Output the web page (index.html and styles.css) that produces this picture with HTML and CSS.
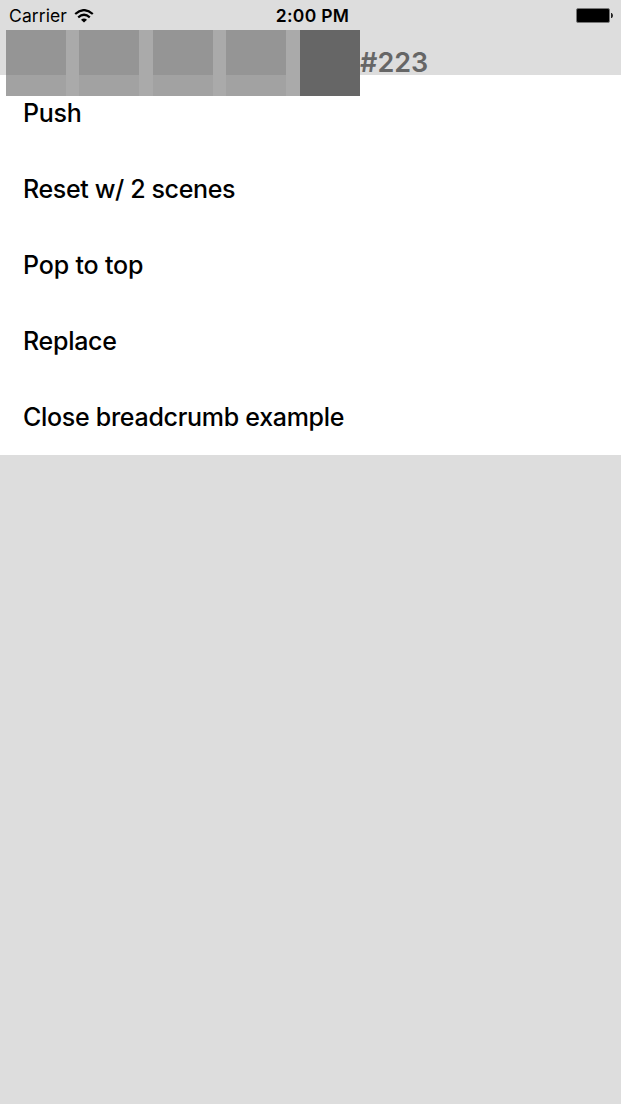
FILE: index.html
```html
<!DOCTYPE html>
<html lang="en">
<head>
<meta charset="utf-8">
<title>Breadcrumb example</title>
<link rel="stylesheet" href="styles.css">
</head>
<body>
<header class="header">
  <div class="status">
    <div class="carrier"><span class="carrier-name">Carrier</span>
      <svg class="wifi" width="20" height="14" viewBox="0 0 20 14" fill="none" stroke="#000" stroke-width="2.2"><path d="M1.2 5Q10-2.8 18.8 5M4.2 8.3Q10 3.2 15.8 8.3"/><path fill="#000" stroke="none" d="M7 10.7Q10 8.3 13 10.7L10 13.6z"/></svg>
    </div>
    <span class="time">2:00 PM</span>
    <svg class="battery" width="37" height="15" viewBox="0 0 37 15"><rect x=".5" y=".5" width="33" height="14" rx="1.5" fill="#000" stroke="#777"/><path d="M35 5h.8q1.2 1 1.2 2.5T35.8 10H35z" fill="#222"/></svg>
  </div>
  <nav class="crumbs">
    <i class="crumb"></i><i class="sep"></i><i class="crumb"></i><i class="sep wide"></i><i class="crumb"></i><i class="sep"></i><i class="crumb"></i><i class="sep wide"></i><i class="crumb current"></i>
    <span class="title">#223</span>
  </nav>
</header>
<main class="list">
  <div class="row">Push</div>
  <div class="row tight">Reset w/ 2 scenes</div>
  <div class="row loose">Pop to top</div>
  <div class="row">Replace</div>
  <div class="row">Close breadcrumb example</div>
</main>
</body>
</html>
```
FILE: styles.css
```css
* { box-sizing: border-box; }
body { margin: 0; min-height: 1104px; background: #ddd; color: #000; font-family: Inter, "Liberation Sans", sans-serif; }
.header { position: relative; height: 75px; }
.status { display: grid; grid-template-columns: 1fr auto 1fr; align-items: center; height: 30px; padding: 0 8px 0 12px; }
.carrier { display: flex; align-items: center; gap: 7px; margin-left: -3px; font-size: 17.5px; line-height: 30px; }
.carrier-name { letter-spacing: .1px; padding-top: 1px; }
.wifi { display: block; }
.time { font-size: 17.5px; font-weight: 600; line-height: 30px; padding-top: 1px; letter-spacing: .3px; }
.battery { justify-self: end; display: block; }
/* The bar hangs over the top of the list. */
.crumbs { position: absolute; left: 6px; top: 30px; height: 66px; display: flex; }
.crumb { width: 60px; background: linear-gradient(#959595 45px, #a2a2a2 45px); }
.crumb.current { background: #666; }
.sep { width: 13px; background: #aaa; }
.sep.wide { width: 14px; }
.title { color: #666; font-size: 27px; font-weight: 600; line-height: 65px; }
.list { background: #fff; }
.row { display: flex; align-items: center; height: 76px; padding-left: 23px; font-size: 25px; font-weight: 500; line-height: 30px; letter-spacing: -.29px; white-space: nowrap; }
.row.tight { letter-spacing: -.37px; }
.row.loose { letter-spacing: -.17px; }
```
